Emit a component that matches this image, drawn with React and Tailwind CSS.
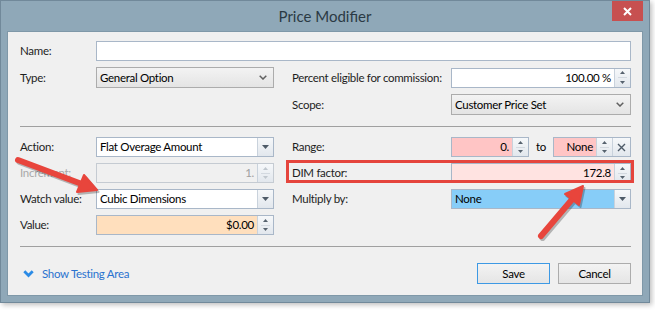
import React from 'react';

function Tri({ up, dim }) {
  return (
    <svg width="5" height="3" viewBox="0 0 5 3" className="block">
      <path d={up ? 'M0 3 L2.5 0 L5 3 Z' : 'M0 0 L5 0 L2.5 3 Z'} fill={dim ? '#c0c7ce' : '#56626e'} />
    </svg>
  );
}

function Spinner({ dim }) {
  return (
    <div className="w-[16px] self-stretch flex flex-col border-l border-[#c9d2dc] bg-gradient-to-b from-[#f6f8fa] to-[#e2e7ed]">
      <div className="flex-1 flex items-center justify-center"><Tri up dim={dim} /></div>
      <div className="h-px mx-[3px] bg-[#d3d9e0]" />
      <div className="flex-1 flex items-center justify-center"><Tri dim={dim} /></div>
    </div>
  );
}

function DropBtn() {
  return (
    <div className="w-[16px] self-stretch flex items-center justify-center border-l border-[#c9d2dc] bg-gradient-to-b from-[#f6f8fa] to-[#e2e7ed]">
      <svg width="7" height="4" viewBox="0 0 7 4"><path d="M0 0 H7 L3.5 4 Z" fill="#4e5b68" /></svg>
    </div>
  );
}

function ClearBtn() {
  return (
    <div className="w-[18px] self-stretch flex items-center justify-center border-l border-[#c9d2dc] bg-gradient-to-b from-[#f6f8fa] to-[#e2e7ed]">
      <svg width="9" height="9" viewBox="0 0 9 9"><path d="M1 1 L8 8 M8 1 L1 8" stroke="#4e5b68" strokeWidth="1.4" /></svg>
    </div>
  );
}

function Field({ children, bg = 'bg-white', right, align = 'justify-start', border = 'border-[#a9b7c8]', text = 'text-black', className = '' }) {
  return (
    <div className={`h-[20px] flex border ${border} ${bg} ${className}`}>
      <div className={`flex-1 min-w-0 flex items-center px-[3px] ${align} ${text}`}>{children}</div>
      {right}
    </div>
  );
}

function Select({ children }) {
  return (
    <div className="h-[21px] flex items-center justify-between pl-[3px] pr-[6px] border border-[#acacac] bg-gradient-to-b from-[#f3f3f3] to-[#e4e4e4] text-black">
      <span>{children}</span>
      <svg width="8" height="5" viewBox="0 0 8 5"><path d="M0.7 0.7 L4 4 L7.3 0.7" fill="none" stroke="#606060" strokeWidth="1.5" /></svg>
    </div>
  );
}

function Label({ children, dim }) {
  return <div className={`whitespace-nowrap ${dim ? 'text-[#a9a9a9]' : 'text-[#1e1e1e]'}`}>{children}</div>;
}

function Arrow({ tail, tip, base1, base2 }) {
  const shaft = `M${tail[0]} ${tail[1]} L${(base1[0] + base2[0]) / 2} ${(base1[1] + base2[1]) / 2}`;
  const head = `M${tip[0]} ${tip[1]} L${base1[0]} ${base1[1]} L${base2[0]} ${base2[1]} Z`;
  return (
    <g>
      <g transform="translate(1.5 2)" opacity="0.25">
        <path d={shaft} stroke="#000" strokeWidth="6" strokeLinecap="round" />
        <path d={head} fill="#000" stroke="#000" strokeWidth="2" strokeLinejoin="round" />
      </g>
      <path d={shaft} stroke="#e8453c" strokeWidth="6" strokeLinecap="round" />
      <path d={head} fill="#e8453c" stroke="#e8453c" strokeWidth="2" strokeLinejoin="round" />
    </g>
  );
}

export default function App() {
  return (
    <div className="relative w-[655px] h-[310px] bg-white overflow-hidden font-['Lato',sans-serif] text-[11.5px] tracking-[-0.3px] leading-none">
      <div className="w-[650px] h-[303px] flex flex-col bg-[#8fa8b8] border border-[#71899a] shadow-[2px_2px_5px_rgba(0,0,0,0.25)]">
        {/* title bar */}
        <div className="h-[30px] grid grid-cols-[1fr_auto_1fr]">
          <div />
          <div className="self-center pt-[1px] text-[15px] tracking-normal text-[#2b3a44]">Price Modifier</div>
          <div className="flex justify-end pr-[6px]">
            <div className="w-[31px] h-[20px] bg-[#c75050] flex items-center justify-center">
              <svg width="9" height="9" viewBox="0 0 9 9"><path d="M1 1 L8 8 M8 1 L1 8" stroke="#fff" strokeWidth="2" /></svg>
            </div>
          </div>
        </div>

        {/* body */}
        <div className="relative mx-[6px] mb-[6px] flex-1 flex flex-col bg-[#f0f0f0] border border-[#7f98a8] pl-[12px] pr-[11px] pt-[9px]">
          <div className="grid grid-cols-[76px_178px_18px_159px_180px] gap-y-[6px] items-center">
            <Label>Name:</Label>
            <div className="col-span-4"><Field /></div>

            <Label>Type:</Label>
            <Select>General Option</Select>
            <div />
            <Label>Percent eligible for commission:</Label>
            <Field align="justify-end" right={<Spinner />}>100.00 %</Field>

            <div className="col-span-3" />
            <Label>Scope:</Label>
            <Select>Customer Price Set</Select>
          </div>

          <div className="mt-[11px] mb-[10px] h-px bg-[#a0a0a0]" />

          <div className="relative grid grid-cols-[76px_178px_18px_159px_180px] gap-y-[6px] items-center">
            <Label>Action:</Label>
            <Field right={<DropBtn />}>Flat Overage Amount</Field>
            <div />
            <Label>Range:</Label>
            <div className="flex items-center justify-between">
              <Field className="w-[78px]" bg="bg-[#ffc5c5]" align="justify-end" right={<Spinner />}>0.</Field>
              <span>to</span>
              <Field className="w-[78px]" bg="bg-[#ffc5c5]" align="justify-end" right={<><Spinner /><ClearBtn /></>}>None</Field>
            </div>

            <Label dim>Increment:</Label>
            <Field bg="bg-[#f0f0f0]" border="border-[#c5cbd2]" align="justify-end" text="text-[#a0a0a0]" right={<Spinner dim />}>1.</Field>
            <div />
            <Label>DIM factor:</Label>
            <Field bg="bg-[#ffe3e1]" align="justify-end" right={<Spinner />}>172.8</Field>

            <Label>Watch value:</Label>
            <Field right={<DropBtn />}>Cubic Dimensions</Field>
            <div />
            <Label>Multiply by:</Label>
            <Field bg="bg-[#87cdf8]" right={<DropBtn />}>None</Field>

            <Label>Value:</Label>
            <Field bg="bg-[#ffdfbd]" align="justify-end" right={<Spinner />}>$0.00</Field>

            {/* annotation box around DIM factor */}
            <div className="absolute left-[266px] top-[23px] w-[348px] h-[23px] border-[3px] border-[#e5453d] pointer-events-none" />
          </div>

          <div className="mt-[11px] h-px bg-[#a0a0a0]" />

          <div className="mt-[16px] flex items-center justify-between">
            <div className="flex items-center gap-[8px] pl-[3px] text-[#2a72cf]">
              <svg width="11" height="8" viewBox="0 0 11 8"><path d="M1.3 1.3 L5.5 5.5 L9.7 1.3" fill="none" stroke="#2b8be6" strokeWidth="2.8" /></svg>
              <span>Show Testing Area</span>
            </div>
            <div className="flex gap-[8px]">
              <div className="w-[73px] h-[21px] flex items-center justify-center border border-[#3d99e4] bg-gradient-to-b from-[#f3f3f3] to-[#e5e5e5] text-black">Save</div>
              <div className="w-[73px] h-[21px] flex items-center justify-center border border-[#acacac] bg-gradient-to-b from-[#f3f3f3] to-[#e5e5e5] text-black">Cancel</div>
            </div>
          </div>
        </div>
      </div>

      {/* red annotation arrows */}
      <svg className="absolute inset-0 pointer-events-none" width="655" height="310" viewBox="0 0 655 310">
        <Arrow tail={[18, 160]} tip={[97, 190]} base1={[77, 192]} base2={[84, 175]} />
        <Arrow tail={[541, 236]} tip={[583, 186]} base1={[579, 205]} base2={[565, 194]} />
      </svg>
    </div>
  );
}
